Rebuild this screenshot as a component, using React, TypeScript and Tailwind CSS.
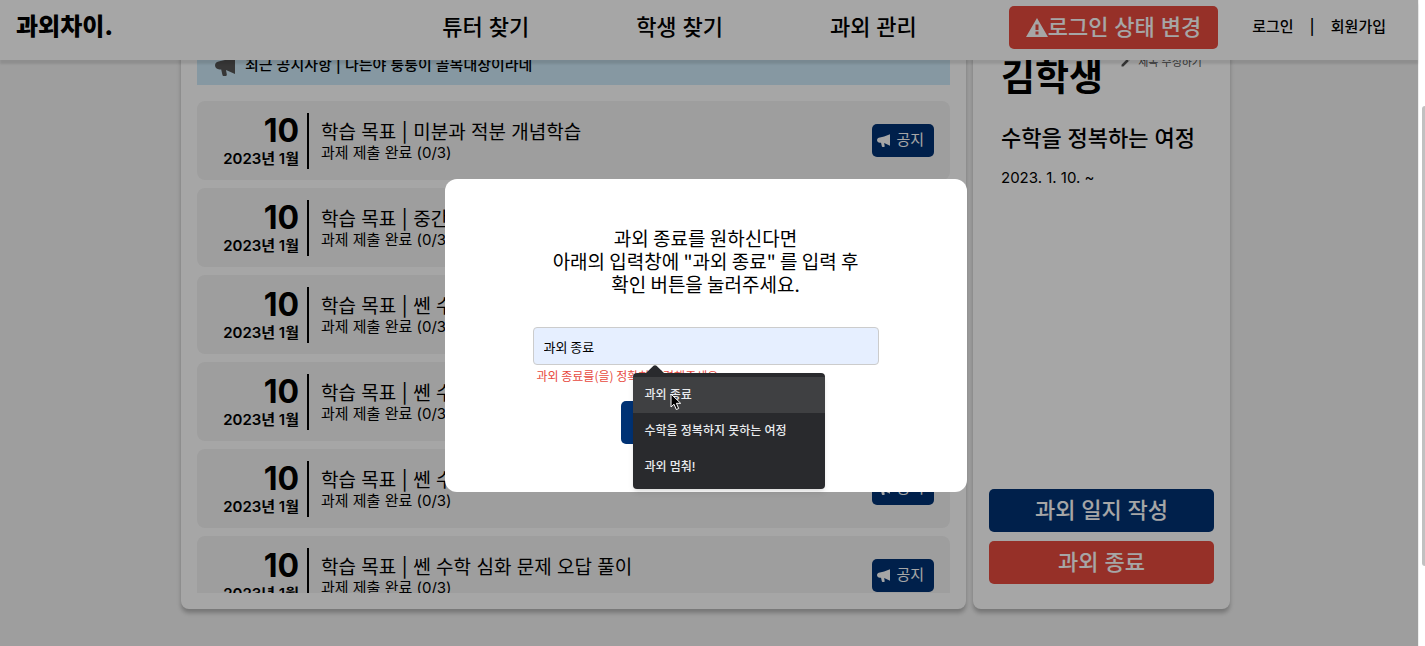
import React, { useState } from 'react';
import { MdEdit } from 'react-icons/md';

const navItems = ['튜터 찾기', '학생 찾기', '과외 관리'];

const journals = [
  { id: 1, title: '학습 목표 | 미분과 적분 개념학습', notice: true },
  { id: 2, title: '학습 목표 | 중간고사 대비 문제 풀이', notice: false },
  { id: 3, title: '학습 목표 | 쎈 수학 기본 문제 풀이', notice: false },
  { id: 4, title: '학습 목표 | 쎈 수학 기본 문제 풀이', notice: false },
  { id: 5, title: '학습 목표 | 쎈 수학 심화 문제 풀이', notice: true },
  { id: 6, title: '학습 목표 | 쎈 수학 심화 문제 오답 풀이', notice: true },
];

const suggestions = ['과외 종료', '수학을 정복하지 못하는 여정', '과외 멈춰!'];

const Megaphone: React.FC<{ className?: string }> = ({ className }) => (
  <svg viewBox="0 0 20 20" fill="currentColor" className={className} aria-hidden="true">
    <path d="M20 .5v17.500L11 14l.8 4.500c.1.900-.3 1.300-1 1.400l-2 .1c-.8 0-1.300-.4-1.400-1.200L6.200 13.500H4.500C2 13.500 0 11.600 0 9.300S2 5.500 4.500 5.200L11 3.800z" />
  </svg>
);

const Warning: React.FC<{ className?: string }> = ({ className }) => (
  <svg viewBox="0 0 22 19" fill="currentColor" className={className} aria-hidden="true">
    <path fillRule="evenodd" d="M11 0l11 19H0zM9.500 6.500v5.500h3V6.500zM9.500 13.500v3h3v-3z" />
  </svg>
);

const Header: React.FC = () => (
  <header className="relative z-10 flex h-[60px] shrink-0 items-center bg-white pb-1.5 pl-4 pr-8 shadow-[0_4px_2px_rgba(0,0,0,0.1)]">
    <a href="#" className="text-[24px] font-black">과외차이.</a>
    <nav className="ml-auto mr-[92px] flex gap-[107px] text-[22px] font-medium">
      {navItems.map((item) => (
        <a key={item} href="#">{item}</a>
      ))}
    </nav>
    <button className="flex h-[43px] items-center rounded-[5px] bg-[#e74a3e] px-[17px] text-[22px] font-medium text-white">
      <Warning className="h-[19px] w-[22px]" />
      로그인 상태 변경
    </button>
    <div className="ml-[34px] flex gap-4 text-[15px] font-medium">
      <a href="#">로그인</a>
      <span>|</span>
      <a href="#">회원가입</a>
    </div>
  </header>
);

const JournalList: React.FC = () => (
  <section className="flex min-w-0 flex-1 flex-col rounded-lg bg-white p-4 shadow-[0_4px_4px_rgba(0,0,0,0.25)]">
    <div className="flex h-[41px] shrink-0 items-center gap-2.5 bg-[#ceeaf9] pl-[18px] pt-0.5 text-[15px] font-medium">
      <Megaphone className="size-5 text-[#555]" />
      최근 공지사항 | 나는야 퉁퉁이 골목대장이라네
    </div>
    <ul className="mt-4 flex min-h-0 flex-1 flex-col gap-2 overflow-hidden">
      {journals.map((journal) => (
        <li key={journal.id} className="flex h-[79px] shrink-0 items-center rounded-lg bg-[#f3f3f3] pr-4">
          <div className="flex h-14 w-28 flex-col items-end justify-center border-r-2 border-black pr-2 pt-1">
            <span className="text-[32px] font-bold leading-8">10</span>
            <span className="text-[15px] font-semibold leading-6">2023년 1월</span>
          </div>
          <div className="flex-1 pl-3 pt-0.5">
            <p className="text-[19px] leading-[22px]">{journal.title}</p>
            <p className="text-[15px] leading-[18px]">과제 제출 완료 (0/3)</p>
          </div>
          {journal.notice && (
            <button className="flex h-[33px] items-center gap-1.5 rounded-[5px] bg-[#003274] pl-[5px] pr-2.5 text-[15px] text-white">
              <Megaphone className="size-[13px]" />
              공지
            </button>
          )}
        </li>
      ))}
    </ul>
  </section>
);

const StudentCard: React.FC = () => (
  <aside className="flex w-[257px] flex-col rounded-lg bg-white px-4 pb-[25px] pt-[22px] shadow-[0_4px_4px_rgba(0,0,0,0.25)]">
    <div className="flex items-start justify-between px-3">
      <h1 className="text-[37px] font-bold leading-[56px]">김학생</h1>
      <button className="flex items-center gap-1.5 pt-1 text-[11px] text-[#555]">
        <MdEdit className="size-3" />
        제목 수정하기
      </button>
    </div>
    <h2 className="mt-4 whitespace-nowrap px-3 text-[22px] font-medium leading-8">수학을 정복하는 여정</h2>
    <p className="mt-3 px-3 text-[15px] leading-6">2023. 1. 10. ~</p>
    <div className="mt-auto flex flex-col gap-[9px] text-[22px] font-medium text-white">
      <button className="h-[43px] rounded-[5px] bg-[#003274]">과외 일지 작성</button>
      <button className="h-[43px] rounded-[5px] bg-[#e74a3e]">과외 종료</button>
    </div>
  </aside>
);

const Suggestions: React.FC<{ onSelect: (value: string) => void }> = ({ onSelect }) => (
  <div className="absolute left-[100px] top-[46px] z-10 w-48 rounded bg-[#292a2d] py-1 font-['Inter','Noto_Sans_CJK_KR',sans-serif] shadow-md">
    <svg viewBox="0 0 20 9" className="absolute -top-[8px] left-3 h-[9px] w-5 text-[#292a2d]" aria-hidden="true">
      <path d="M0 9L8.500.8c.8-.8 2.200-.8 3 0L20 9z" fill="currentColor" />
    </svg>
    {suggestions.map((text, i) => (
      <button
        key={text}
        onClick={() => onSelect(text)}
        className={`block h-9 w-full px-3 text-left text-[12px] font-medium text-[#e8eaed] ${i === 0 ? 'bg-[#3f4042]' : ''}`}
      >
        {text}
      </button>
    ))}
    {/* pointer */}
    <svg viewBox="0 0 12 18" className="absolute left-[37px] top-5 h-[18px] w-3" aria-hidden="true">
      <path d="M1 1v13l3-2.800 2.300 5.300 2.400-1-2.300-5.200h4.300z" fill="#000" stroke="#fff" strokeWidth="1" />
    </svg>
  </div>
);

const EndModal: React.FC = () => {
  const [value, setValue] = useState('과외 종료');

  return (
    <div className="absolute inset-0 z-20 flex items-start justify-center bg-black/35 pr-[7px] pt-[179px] font-['Noto_Sans_CJK_KR',sans-serif]">
      <div role="dialog" className="flex w-[522px] flex-col items-center rounded-xl bg-white px-[88px] pb-12 pt-[47px]">
        <label htmlFor="confirm" className="whitespace-nowrap text-center text-[19px] leading-[23px]">
          과외 종료를 원하신다면
          <br />
          아래의 입력창에 "과외 종료" 를 입력 후
          <br />
          확인 버튼을 눌러주세요.
        </label>
        <div className="relative mt-8 w-full">
          <input
            id="confirm"
            value={value}
            onChange={(e) => setValue(e.target.value)}
            className="block h-[38px] w-full rounded border border-[#ccc] bg-[#e6efff] px-[10px] text-[13px]"
          />
          <p className="mt-[3px] pl-1 text-[12px] leading-4 text-[#e74a3e]">과외 종료를(을) 정확히 입력해주세요.</p>
          <Suggestions onSelect={setValue} />
        </div>
        <button className="mt-[17px] h-[43px] w-[169px] rounded-[5px] bg-[#003274] text-[22px] font-medium text-white">확인</button>
      </div>
    </div>
  );
};

export default function App() {
  return (
    <div className="flex h-screen overflow-hidden font-['Inter','Noto_Sans_CJK_KR',sans-serif] text-black">
      <div className="relative flex min-w-0 flex-1 flex-col bg-[#f3f3f3]">
        <Header />
        <main className="-mt-8 flex min-h-0 flex-1 justify-center pb-[37px] pr-[7px]">
          <div className="flex w-full max-w-[1049px] gap-[7px]">
            <JournalList />
            <StudentCard />
          </div>
        </main>
        <EndModal />
      </div>
      {/* scrollbar */}
      <div className="w-[7px] border-l border-[#eee] bg-white pl-[3px] pt-[106px]">
        <div className="h-[460px] rounded-l bg-[#c1c1c1]" />
      </div>
    </div>
  );
}
